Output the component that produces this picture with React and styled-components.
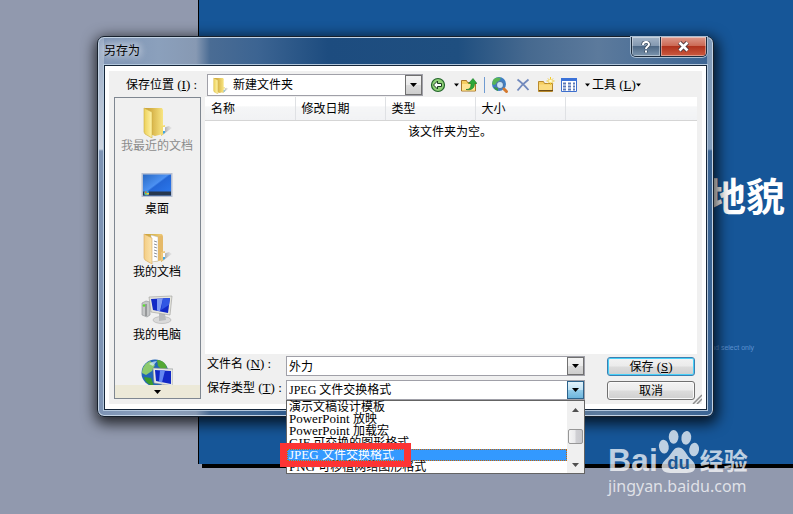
import React, { useState } from 'react';
import styled, { createGlobalStyle, css } from 'styled-components';

const GlobalStyle = createGlobalStyle`
  * {
    box-sizing: border-box;
  }

  body {
    margin: 0;
    background-color: #9199ae;
    font-family: 'Liberation Serif', 'Noto Sans CJK SC', serif;
    font-size: 12px;
    line-height: 16px;
    color: #000;
  }

  button,
  input,
  select {
    margin: 0;
    font: inherit;
    color: inherit;
  }
`;

const Desktop = styled.div`
  position: relative;
  min-height: 100vh;
  overflow: hidden;
  background-color: #9199ae;
`;

const Slide = styled.section`
  display: flex;
  flex-direction: column;
  align-items: flex-end;
  height: calc(100vh - 50px);
  min-height: 464px;
  margin-left: 198px;
  padding-top: 170px;
  padding-right: 8px;
  border-left: 1px solid #000;
  background-color: #165698;
  box-shadow: 4px 4px 0 #000;
`;

const SlideTitle = styled.h1`
  margin: 0;
  font-family: 'Noto Sans CJK SC', sans-serif;
  font-size: 39px;
  font-weight: 700;
  line-height: 48px;
  color: #fff;
`;

const SlideNote = styled.p`
  margin: 126px 31px 0 0;
  font-family: 'Liberation Sans', sans-serif;
  font-size: 7px;
  line-height: 8px;
  color: #5d92d0;
`;

const Window = styled.div`
  position: absolute;
  top: 36px;
  left: 97px;
  right: 79px;
  padding: 0 6px 6px;
  border: 1px solid #16202c;
  border-radius: 7px;
  background:
    linear-gradient(
      180deg,
      rgba(255, 255, 255, 0.35) 0,
      rgba(255, 255, 255, 0.35) 112px,
      rgba(255, 255, 255, 0) 114px
    ) right / 6px 100% no-repeat,
    linear-gradient(
      180deg,
      rgba(255, 255, 255, 0.2) 0,
      rgba(255, 255, 255, 0.6) 112px,
      rgba(255, 255, 255, 0) 114px
    ) left / 6px 100% no-repeat,
    linear-gradient(
      90deg,
      #7d93b4 0,
      #8ba0bc 60px,
      #8799b3 98px,
      #4a6c94 112px,
      #3c6492 160px,
      #1d4c7f 230px,
      #1f4f80 360px,
      #46698f 430px,
      #5c7a9c 500px,
      #3b6493 100%
    );
  box-shadow:
    inset 0 0 0 1px #c3d3e4,
    1px 4px 14px 3px rgba(0, 0, 0, 0.75);
`;

const TitleBar = styled.header`
  display: flex;
  justify-content: space-between;
  align-items: flex-start;
  height: 28px;
`;

const WindowTitle = styled.h2`
  margin: 0;
  padding: 5px 6px 0 0;
  font-family: 'Noto Sans CJK SC', sans-serif;
  font-size: 12px;
  font-weight: 400;
  line-height: 16px;
  text-shadow: 0 0 8px #fff, 0 0 8px #fff;
`;

const Caption = styled.div`
  display: flex;
  height: 20px;
  border: 1px solid #1c2c3e;
  border-top: 0;
  border-radius: 0 0 5px 5px;
  overflow: hidden;
  box-shadow: 0 0 0 1px #a9bed2;
`;

const CaptionButton = styled.button`
  display: flex;
  align-items: center;
  justify-content: center;
  width: 28px;
  padding: 0;
  border: 0;
  background: linear-gradient(#a3b4c7 0, #8499b1 45%, #4e6986 50%, #7c95ae 100%);
  box-shadow: inset 0 0 0 1px rgba(255, 255, 255, 0.4);

  ${({ $close }) =>
    $close &&
    css`
      width: 46px;
      border-left: 1px solid #1c2c3e;
      background: linear-gradient(#dd9a8c 0, #cc6b56 45%, #b0331d 50%, #cb5a40 100%);
    `}
`;

const Client = styled.div`
  padding: 5px 4px;
  border: 1px solid #15263a;
  outline: 1px solid #b3c7dc;
  background-color: #fff;
`;

const Panel = styled.form`
  position: relative;
  display: flex;
  flex-direction: column;
  gap: 1px;
  padding: 3px 5px 4px;
  background-color: #f0f0f0;
`;

const LocationRow = styled.div`
  display: flex;
  align-items: center;
  height: 22px;
`;

const LocationLabel = styled.label`
  width: 93px;
  padding-left: 12px;
  white-space: nowrap;
`;

const Latin = styled.span`
  font-family: 'Liberation Serif', serif;
  font-size: 13px;
  white-space: pre;
`;

const Combo = styled.div`
  display: flex;
  align-items: center;
  flex: ${({ $width }) => ($width ? `0 0 ${$width}` : '1')};
  min-width: 0;
  height: ${({ $tall }) => ($tall ? '22px' : '20px')};
  padding-left: ${({ $tall }) => ($tall ? '4px' : '0')};
  border: 1px solid #a0a0a8;
  background-color: #fff;
`;

const field = css`
  flex: 1;
  min-width: 0;
  height: 18px;
  padding: 0 2px;
  border: 0;
  border-radius: 0;
  outline: 0;
  background: none;
  line-height: 16px;
`;

const TextField = styled.input`
  ${field}
`;

const SelectField = styled.select`
  ${field}
  padding-left: ${({ $spaced }) => ($spaced ? '4px' : '2px')};
  appearance: none;
`;

const DropButton = styled.button`
  display: flex;
  align-items: center;
  justify-content: center;
  align-self: stretch;
  width: 17px;
  padding: 0;
  border: 1px solid ${({ $open }) => ($open ? '#2c628b' : '#707070')};
  background: ${({ $open }) =>
    $open
      ? 'linear-gradient(#e3f3fb 0, #c3e3f4 48%, #93cbe9 52%, #6db6dd 100%)'
      : 'linear-gradient(#f3f3f3 0, #ebebeb 48%, #dadada 52%, #cdcdcd 100%)'};
`;

const Toolbar = styled.div`
  display: flex;
  align-items: center;
  height: 22px;
  padding-left: 6px;
`;

const ToolButton = styled.button`
  display: flex;
  align-items: center;
  justify-content: center;
  width: ${({ $narrow }) => ($narrow ? '8px' : '18px')};
  height: 20px;
  margin-right: ${({ $gap }) => ($gap ? '5px' : '0')};
  padding: 0;
  border: 0;
  background: none;
`;

const ToolsMenu = styled.button`
  display: flex;
  align-items: center;
  padding: 0 0 0 1px;
  border: 0;
  background: none;
  white-space: nowrap;
`;

const Separator = styled.span`
  width: 1px;
  height: 16px;
  margin: 0 6px;
  background-color: #6f9bd1;
`;

const Body = styled.div`
  display: flex;
  gap: 4px;
`;

const Places = styled.nav`
  display: flex;
  flex-direction: column;
  flex: 0 0 87px;
  height: 302px;
  border: 1px solid #7f8791;
`;

const Place = styled.button`
  display: flex;
  flex-direction: column;
  align-items: center;
  justify-content: flex-end;
  height: ${({ $last }) => ($last ? '46px' : '63px')};
  flex-shrink: 0;
  padding: 0 1px 0 0;
  border: 0;
  background: none;
  line-height: 16px;
  white-space: nowrap;
  color: ${({ $dim }) => ($dim ? '#8c8c8c' : '#000')};
`;

const PlaceList = styled.div`
  display: flex;
  flex-direction: column;
  flex: 1;
  min-height: 0;
  overflow: hidden;

  & ${Place}:first-child {
    height: 56px;
  }
`;

const MorePlaces = styled.button`
  display: flex;
  align-items: center;
  justify-content: center;
  height: 13px;
  padding: 0;
  border: 0;
  background-color: #ece9d8;
`;

const Main = styled.div`
  display: flex;
  flex-direction: column;
  flex: 1;
  min-width: 0;
`;

const FileView = styled.div`
  height: 257px;
  background-color: #fff;
  font-family: 'Noto Sans CJK SC', sans-serif;
`;

const FileTable = styled.table`
  width: 100%;
  border-collapse: collapse;
  table-layout: fixed;
`;

const HeadCell = styled.th`
  width: ${({ $rest }) => ($rest ? 'auto' : '90px')};
  height: 23px;
  padding: 0 0 0 6px;
  border-right: ${({ $rest }) => ($rest ? '0' : '1px solid #dfe1e4')};
  border-bottom: 1px solid #d5d5d5;
  background: linear-gradient(#fff 0, #fff 40%, #f5f6f7 42%, #f1f2f4 100%);
  font-weight: 400;
  text-align: left;
`;

const EmptyCell = styled.td`
  height: 24px;
  padding: 0 2px 2px 0;
  text-align: center;
`;

const Footer = styled.div`
  display: flex;
  gap: 22px;
  padding-top: 2px;
  padding-right: 2px;
`;

const Fields = styled.div`
  display: flex;
  flex-direction: column;
  flex: 1;
  gap: 4px;
  min-width: 0;
`;

const FieldRow = styled.div`
  position: relative;
  display: flex;
  align-items: center;
`;

const FieldLabel = styled.label`
  flex: 0 0 81px;
  height: 20px;
  padding-left: 2px;
  white-space: nowrap;
`;

const Actions = styled.div`
  display: flex;
  flex-direction: column;
  gap: 5px;
  width: 88px;
  padding-top: 1px;
`;

const ActionButton = styled.button`
  height: 19px;
  padding: 0;
  border: 1px solid ${({ $primary }) => ($primary ? '#3c7fb1' : '#707070')};
  border-radius: 3px;
  background: linear-gradient(#f3f3f3 0, #ebebeb 48%, #dcdcdc 52%, #cfcfcf 100%);
  box-shadow: inset 0 0 0 1px ${({ $primary }) => ($primary ? '#48d0f8' : '#fafafa')};
  line-height: 16px;
`;

const Popup = styled.div`
  position: absolute;
  top: 20px;
  left: 81px;
  right: 0;
  z-index: 2;
  display: flex;
  height: 74px;
  border: 1px solid #646464;
  background-color: #fff;
`;

const Options = styled.ul`
  flex: 1;
  margin: 0;
  padding: 0;
  list-style: none;
`;

const Option = styled.li`
  height: 12px;
  padding-left: 2px;
  line-height: 12px;
  white-space: nowrap;
  cursor: default;
  color: ${({ $selected }) => ($selected ? '#fff' : '#000')};
  background-color: ${({ $selected }) => ($selected ? '#3399ff' : '#fff')};
  outline: ${({ $selected }) => ($selected ? '1px dotted #cc6600' : '0')};
  outline-offset: -1px;
`;

const ScrollBar = styled.div`
  display: flex;
  flex-direction: column;
  align-items: center;
  justify-content: space-between;
  width: 17px;
  padding: 7px 1px 6px;
  background-color: #f0f0f0;
`;

const Thumb = styled.span`
  width: 15px;
  height: 15px;
  margin-top: 10px;
  margin-bottom: 12px;
  border: 1px solid #979797;
  border-radius: 2px;
  background: linear-gradient(90deg, #f5f5f5 0, #e9e9eb 48%, #d0d0d4 52%, #c8c8cc 100%);
`;

const Highlight = styled.span`
  position: absolute;
  top: 63px;
  left: 75px;
  z-index: 3;
  width: 131px;
  height: 24px;
  border: solid #fc3434;
  border-width: 6px 7px;
  pointer-events: none;
`;

const Grip = styled.svg`
  position: absolute;
  right: 0;
  bottom: 0;
`;

const Watermark = styled.a`
  position: absolute;
  right: 43px;
  bottom: 16px;
  display: flex;
  flex-direction: column;
  width: 142px;
  color: rgba(255, 255, 255, 0.72);
  font-family: 'Noto Sans', sans-serif;
  text-decoration: none;
`;

const WatermarkBrand = styled.span`
  display: flex;
  align-items: flex-end;
  height: 46px;
  font-family: 'Liberation Sans', sans-serif;
  font-size: 32px;
  font-weight: 700;
  line-height: 28px;
`;

const WatermarkName = styled.span`
  padding-left: 1px;
  font-family: 'Noto Sans CJK SC', sans-serif;
  font-size: 24px;
  font-weight: 700;
  line-height: 28px;
`;

const WatermarkSite = styled.span`
  font-size: 16px;
  line-height: 24px;
`;

function Caret({ up, soft, size = 7 }) {
  return (
    <svg width={size} height="4" viewBox="0 0 7 4" aria-hidden="true">
      <path d={up ? 'M0 4h7L3.5 0z' : 'M0 0h7L3.5 4z'} fill={soft ? '#505050' : '#000'} />
    </svg>
  );
}

function FolderIcon({ size = 32, kind }) {
  return (
    <svg width={size} height={size} viewBox="0 0 32 32" aria-hidden="true">
      <defs>
        <linearGradient id={`folder-back-${kind}`} x1="0" x2="1">
          <stop offset="0" stopColor="#c9a03a" />
          <stop offset="0.4" stopColor="#d9b64c" />
          <stop offset="1" stopColor={kind === 'docs' ? '#f0cd83' : '#f8e582'} />
        </linearGradient>
        <linearGradient id={`folder-front-${kind}`} x1="0" x2="1">
          <stop offset="0" stopColor={kind === 'docs' ? '#f3cd84' : '#ecd058'} />
          <stop offset="1" stopColor={kind === 'docs' ? '#fbe3ac' : '#fff3a8'} />
        </linearGradient>
        <linearGradient id={`folder-shade-${kind}`} x1="0" x2="1">
          <stop offset="0" stopColor="#555" stopOpacity="0.7" />
          <stop offset="1" stopColor="#999" stopOpacity="0.1" />
        </linearGradient>
      </defs>
      <path d="M20 30l11-8-3-2-6 2z" fill={`url(#folder-shade-${kind})`} />
      <path d="M4 2l17 0 1 2v24l-8 2-10-4z" fill={`url(#folder-back-${kind})`} />
      {kind === 'docs' && (
        <>
          <path d="M10 3l7 2v24l-7 1z" fill="#fff" stroke="#b8b8b8" strokeWidth="0.5" />
          <path
            d="M13 9l3 1M13 12l3 1M13 15l3 1M13 18l3 1M13 21l3 1M13 24l3 1"
            stroke="#8f9299"
          />
          <path d="M17 5l4-2 1 2v17l-2 6h-3z" fill="#e5b968" />
        </>
      )}
      <path
        d="M3 2l8 4v26l-7-4-1-2z"
        fill={`url(#folder-front-${kind})`}
        stroke={kind === 'docs' ? '#d8aa5a' : '#cfae42'}
        strokeWidth="0.6"
      />
      <path d="M20 20l4-1v8l-4 3z" fill={kind === 'docs' ? '#eec679' : '#f3dc70'} />
      <path d="M22 21h2v6l-2 1z" fill="#f8fcff" />
      <path d="M22 25h2v2l-2 1z" fill="#43a5e0" />
    </svg>
  );
}

function DesktopIcon() {
  return (
    <svg width="32" height="32" viewBox="0 0 32 32" aria-hidden="true">
      <defs>
        <linearGradient id="desktop-screen" x1="0" y1="0" x2="1" y2="1">
          <stop offset="0" stopColor="#2869c4" />
          <stop offset="0.45" stopColor="#4c91f2" />
          <stop offset="0.5" stopColor="#2467d7" />
          <stop offset="1" stopColor="#2c7af0" />
        </linearGradient>
      </defs>
      <path d="M.5 4h31v24H.5z" fill="#b7c0d3" />
      <path d="M2 5.500h28v21H2z" fill="url(#desktop-screen)" />
      <path d="M2 22.500h28v4H2z" fill="#26384f" />
      <circle cx="5.500" cy="24" r="2.500" fill="#3fa3d1" />
      <path d="M5.500 24H8v1.500H5.500z" fill="#f2d03a" />
      <path d="M4 24h1.500v1.500H4z" fill="#7ed33c" />
      <path d="M4 22.500h1.500V24H4z" fill="#f1672a" />
    </svg>
  );
}

function Monitor({ x, y }) {
  return (
    <g transform={`translate(${x} ${y})`}>
      <path d="M0 1l23-1-2 19L2 16z" fill="#e5e5dd" stroke="#9a9a98" strokeWidth="0.6" />
      <path d="M2 3l19-1-2 15L4 14z" fill="#1229c6" />
      <path d="M8 2.700l6-.3-3 12.900-3-.7z" fill="#7f9bf4" />
      <path d="M14 2.400l7-.4-1 7-8 5z" fill="#3157e4" />
    </g>
  );
}

function ComputerIcon() {
  return (
    <svg width="32" height="32" viewBox="0 0 32 32" aria-hidden="true">
      <path d="M1 8l4-2 4 1v13l-3 2-5-2z" fill="#c5c7c8" stroke="#8b8e90" strokeWidth="0.6" />
      <path d="M5 9v12" stroke="#686b6d" />
      <circle cx="3" cy="10.500" r="1.300" fill="#5bdc32" />
      <ellipse cx="21" cy="25" rx="9" ry="3.500" fill="#dadada" stroke="#a1a1a1" strokeWidth="0.5" />
      <path d="M18 18l6 1 1 6-7 1z" fill="#b8babb" />
      <Monitor x="8" y="1" />
    </svg>
  );
}

function NetworkIcon() {
  return (
    <svg width="32" height="32" viewBox="0 0 32 32" aria-hidden="true">
      <circle cx="14" cy="16" r="13.500" fill="#2366b8" />
      <path d="M9 4c-5 2-8 7-8 12l4 2 6-4 3-6z" fill="#8dca6e" />
      <path d="M16 3c6 0 9 4 10 8l-5 2-4-4z" fill="#53a835" />
      <path d="M3 20l7 1 3 8c-5-1-9-4-10-9z" fill="#3b9b2c" />
      <path d="M8 7c2-2 6-3 8-3l-4 5z" fill="#d8f0ff" opacity="0.7" />
      <path d="M12 11l20 1v17l-19-3z" fill="#e6e8e6" stroke="#8c9090" strokeWidth="0.6" />
      <path d="M14 13l16 1v13l-15-3z" fill="#1229c6" />
      <path d="M19 13.300l5 .3-3 12-3-.6z" fill="#6487f1" />
    </svg>
  );
}

function BackIcon() {
  return (
    <svg width="16" height="16" viewBox="0 0 16 16" aria-hidden="true">
      <circle cx="8" cy="8" r="6.500" fill="#8fd077" stroke="#22652a" strokeWidth="1.200" />
      <path d="M3.500 8l4-4v2.500h4v3h-4V12z" fill="#fff" stroke="#1c3e20" />
    </svg>
  );
}

function UpIcon() {
  return (
    <svg width="16" height="16" viewBox="0 0 16 16" aria-hidden="true">
      <path d="M.5 3.500h5l1 2h8v8.500H.5z" fill="#f6cf62" stroke="#a9782a" />
      <path d="M1 7h13v6.500H1z" fill="#ffe594" />
      <path
        d="M5 12.500c4 0 5-2 5-6H7.500L12 1.500l4 5h-2.500c0 5-3 7-8.500 6z"
        fill="#2da83a"
        stroke="#137724"
        strokeWidth="0.6"
      />
    </svg>
  );
}

function SearchWebIcon() {
  return (
    <svg width="18" height="18" viewBox="0 0 18 18" aria-hidden="true">
      <circle cx="8" cy="8" r="7" fill="#3f7fc4" />
      <path d="M2 4c2-3 6-3 8-2L7 7 3 9 1 8z" fill="#58b455" />
      <path d="M3 11l4 1v3c-2-1-4-2-4-4z" fill="#399a3d" />
      <circle
        cx="9"
        cy="9"
        r="3.500"
        fill="#d9eefa"
        fillOpacity="0.9"
        stroke="#4f76a8"
        strokeWidth="1.200"
      />
      <path d="M13 13l2.500 2.500" stroke="#d5792e" strokeWidth="3" strokeLinecap="round" />
    </svg>
  );
}

function DeleteIcon() {
  return (
    <svg width="14" height="14" viewBox="0 0 14 14" aria-hidden="true">
      <path
        d="M1.500 1.500C5 4 9 8 12.500 12M12.500 1.500C8 5 4 9 1.500 12.500"
        fill="none"
        stroke="#7189bd"
        strokeWidth="1.800"
      />
    </svg>
  );
}

function NewFolderIcon() {
  return (
    <svg width="17" height="16" viewBox="0 0 17 16" aria-hidden="true">
      <path d="M.5 4.500h5l1 2h8v8H.5z" fill="#f5cd60" stroke="#b98a2c" />
      <path d="M1 7.500h13V14H1z" fill="#fbdc80" />
      <path d="M1 13.500h14" stroke="#6d4c14" />
      <path d="M12.500 0v8M8.500 4h8M10 1.500l5 5M15 1.500l-5 5" stroke="#f2c928" />
      <circle cx="12.500" cy="4" r="1.500" fill="#fffbd0" />
    </svg>
  );
}

function ViewsIcon() {
  return (
    <svg width="16" height="14" viewBox="0 0 16 14" aria-hidden="true">
      <path d="M.5.5h15v13H.5z" fill="#fff" stroke="#3d6fce" />
      <path d="M0 0h16v3H0z" fill="#3b72d8" />
      <path
        d="M2 5.500h3M2 8.500h3M2 11.500h3M7 5.500h3M7 8.500h3M7 11.500h3M12 5.500h2M12 8.500h2M12 11.500h2"
        stroke="#5b79b8"
        strokeWidth="2"
      />
    </svg>
  );
}

function PawIcon() {
  return (
    <svg width="41" height="45" viewBox="0 0 42 46" aria-hidden="true">
      <g fill="currentColor">
        <ellipse cx="6" cy="18" rx="5" ry="7" transform="rotate(-8 6 18)" />
        <ellipse cx="16" cy="8" rx="5" ry="7" />
        <ellipse cx="29" cy="9" rx="5" ry="7" transform="rotate(8 29 9)" />
        <ellipse cx="37" cy="21" rx="5" ry="7" transform="rotate(8 37 21)" />
        <path d="M21 19c5 0 7 5 10 9 4 4 8 7 7 12-1 6-8 5-17 5S5 46 4 40c-1-5 3-8 7-12s5-9 10-9z" />
      </g>
      <text
        x="21"
        y="41"
        textAnchor="middle"
        fontFamily="Liberation Sans"
        fontSize="19"
        fontWeight="700"
        fill="#1c5795"
      >
        du
      </text>
    </svg>
  );
}

const columns = ['名称', '修改日期', '类型', '大小'];

const places = [
  { name: '我最近的文档', icon: <FolderIcon kind="recent" />, dim: true },
  { name: '桌面', icon: <DesktopIcon /> },
  { name: '我的文档', icon: <FolderIcon kind="docs" /> },
  { name: '我的电脑', icon: <ComputerIcon /> },
];

const fileTypes = [
  { latin: '', name: '演示文稿设计模板' },
  { latin: 'PowerPoint ', name: '放映' },
  { latin: 'PowerPoint ', name: '加载宏' },
  { latin: 'GIF ', name: '可交换的图形格式' },
  { latin: 'JPEG ', name: '文件交换格式' },
  { latin: 'PNG ', name: '可移植网络图形格式' },
];

function Key({ children, colon }) {
  return (
    <Latin>
      {' ('}
      <u>{children}</u>
      {colon ? ') :' : ')'}
    </Latin>
  );
}

export default function App() {
  const [fileName, setFileName] = useState('外力');
  const [fileType, setFileType] = useState(4);

  return (
    <Desktop>
      <GlobalStyle />
      <Slide>
        <SlideTitle>地貌</SlideTitle>
        <SlideNote>and select only</SlideNote>
      </Slide>

      <Window role="dialog" aria-labelledby="window-title">
        <TitleBar>
          <WindowTitle id="window-title">另存为</WindowTitle>
          <Caption>
            <CaptionButton type="button" aria-label="帮助">
              <svg width="10" height="12" viewBox="0 0 10 12">
                <path
                  d="M2 4c0-4 6-4 6-.5C8 5.500 5 5.500 5 8M5 9.500v2"
                  fill="none"
                  stroke="#3a4b5e"
                  strokeWidth="3.500"
                />
                <path
                  d="M2 4c0-4 6-4 6-.5C8 5.500 5 5.500 5 8M5 9.500v2"
                  fill="none"
                  stroke="#fff"
                  strokeWidth="2"
                />
              </svg>
            </CaptionButton>
            <CaptionButton type="button" $close aria-label="关闭">
              <svg width="13" height="11" viewBox="0 0 13 11">
                <path d="M2.500 1.500l8 8M10.500 1.500l-8 8" stroke="#4d3a40" strokeWidth="4.500" />
                <path d="M2.500 1.500l8 8M10.500 1.500l-8 8" stroke="#fff" strokeWidth="2.600" />
              </svg>
            </CaptionButton>
          </Caption>
        </TitleBar>

        <Client>
          <Panel onSubmit={(e) => e.preventDefault()}>
            <LocationRow>
              <LocationLabel htmlFor="location">
                保存位置<Key colon>I</Key>
              </LocationLabel>
              <Combo $tall $width="216px">
                <FolderIcon size={17} kind="location" />
                <SelectField id="location" $spaced>
                  <option>新建文件夹</option>
                </SelectField>
                <DropButton type="button" aria-label="展开位置">
                  <Caret />
                </DropButton>
              </Combo>
              <Toolbar>
                <ToolButton type="button" aria-label="后退" $gap>
                  <BackIcon />
                </ToolButton>
                <ToolButton type="button" $narrow aria-label="历史">
                  <Caret size={5} />
                </ToolButton>
                <ToolButton type="button" aria-label="向上">
                  <UpIcon />
                </ToolButton>
                <Separator />
                <ToolButton type="button" $gap aria-label="搜索">
                  <SearchWebIcon />
                </ToolButton>
                <ToolButton type="button" $gap aria-label="删除">
                  <DeleteIcon />
                </ToolButton>
                <ToolButton type="button" $gap aria-label="新建">
                  <NewFolderIcon />
                </ToolButton>
                <ToolButton type="button" $gap aria-label="视图">
                  <ViewsIcon />
                </ToolButton>
                <ToolButton type="button" $narrow aria-label="更多视图">
                  <Caret size={5} />
                </ToolButton>
                <ToolsMenu type="button">
                  工具<Key>L</Key>
                  <Caret size={5} />
                </ToolsMenu>
              </Toolbar>
            </LocationRow>

            <Body>
              <Places>
                <PlaceList>
                  {places.map(({ name, icon, dim }) => (
                    <Place key={name} type="button" $dim={dim}>
                      {icon}
                      {name}
                    </Place>
                  ))}
                  <Place type="button" $last aria-label="网络">
                    <NetworkIcon />
                  </Place>
                </PlaceList>
                <MorePlaces type="button" aria-label="更多">
                  <Caret />
                </MorePlaces>
              </Places>

              <Main>
                <FileView>
                  <FileTable>
                    <thead>
                      <tr>
                        {columns.map((column) => (
                          <HeadCell key={column}>{column}</HeadCell>
                        ))}
                        <HeadCell $rest />
                      </tr>
                    </thead>
                    <tbody>
                      <tr>
                        <EmptyCell colSpan={5}>该文件夹为空。</EmptyCell>
                      </tr>
                    </tbody>
                  </FileTable>
                </FileView>

                <Footer>
                  <Fields>
                    <FieldRow>
                      <FieldLabel htmlFor="file-name">
                        文件名<Key colon>N</Key>
                      </FieldLabel>
                      <Combo>
                        <TextField
                          id="file-name"
                          value={fileName}
                          onChange={(e) => setFileName(e.target.value)}
                        />
                        <DropButton type="button" aria-label="展开文件名">
                          <Caret />
                        </DropButton>
                      </Combo>
                    </FieldRow>
                    <FieldRow>
                      <FieldLabel htmlFor="file-type">
                        保存类型<Key colon>T</Key>
                      </FieldLabel>
                      <Combo>
                        <SelectField
                          id="file-type"
                          value={fileType}
                          onChange={(e) => setFileType(Number(e.target.value))}
                        >
                          {fileTypes.map(({ latin, name }, index) => (
                            <option key={latin + name} value={index}>
                              {latin + name}
                            </option>
                          ))}
                        </SelectField>
                        <DropButton type="button" $open aria-label="展开类型">
                          <Caret />
                        </DropButton>
                      </Combo>
                      <Popup>
                        <Options role="listbox" aria-label="保存类型">
                          {fileTypes.map(({ latin, name }, index) => (
                            <Option
                              key={latin + name}
                              role="option"
                              aria-selected={index === fileType}
                              $selected={index === fileType}
                              onClick={() => setFileType(index)}
                            >
                              {latin && <Latin>{latin}</Latin>}
                              {name}
                            </Option>
                          ))}
                        </Options>
                        <ScrollBar>
                          <Caret up soft />
                          <Thumb />
                          <Caret soft />
                        </ScrollBar>
                      </Popup>
                      <Highlight />
                    </FieldRow>
                  </Fields>
                  <Actions>
                    <ActionButton type="submit" $primary>
                      保存<Key>S</Key>
                    </ActionButton>
                    <ActionButton type="button">取消</ActionButton>
                  </Actions>
                </Footer>
              </Main>
            </Body>
            <Grip width="10" height="10" viewBox="0 0 10 10" aria-hidden="true">
              <path d="M1 10l9-9M5 10l5-5" stroke="#8f8f8f" strokeWidth="1.500" />
            </Grip>
          </Panel>
        </Client>
      </Window>

      <Watermark href="#jingyan">
        <WatermarkBrand>
          Bai
          <PawIcon />
          <WatermarkName>经验</WatermarkName>
        </WatermarkBrand>
        <WatermarkSite>jingyan.baidu.com</WatermarkSite>
      </Watermark>
    </Desktop>
  );
}
